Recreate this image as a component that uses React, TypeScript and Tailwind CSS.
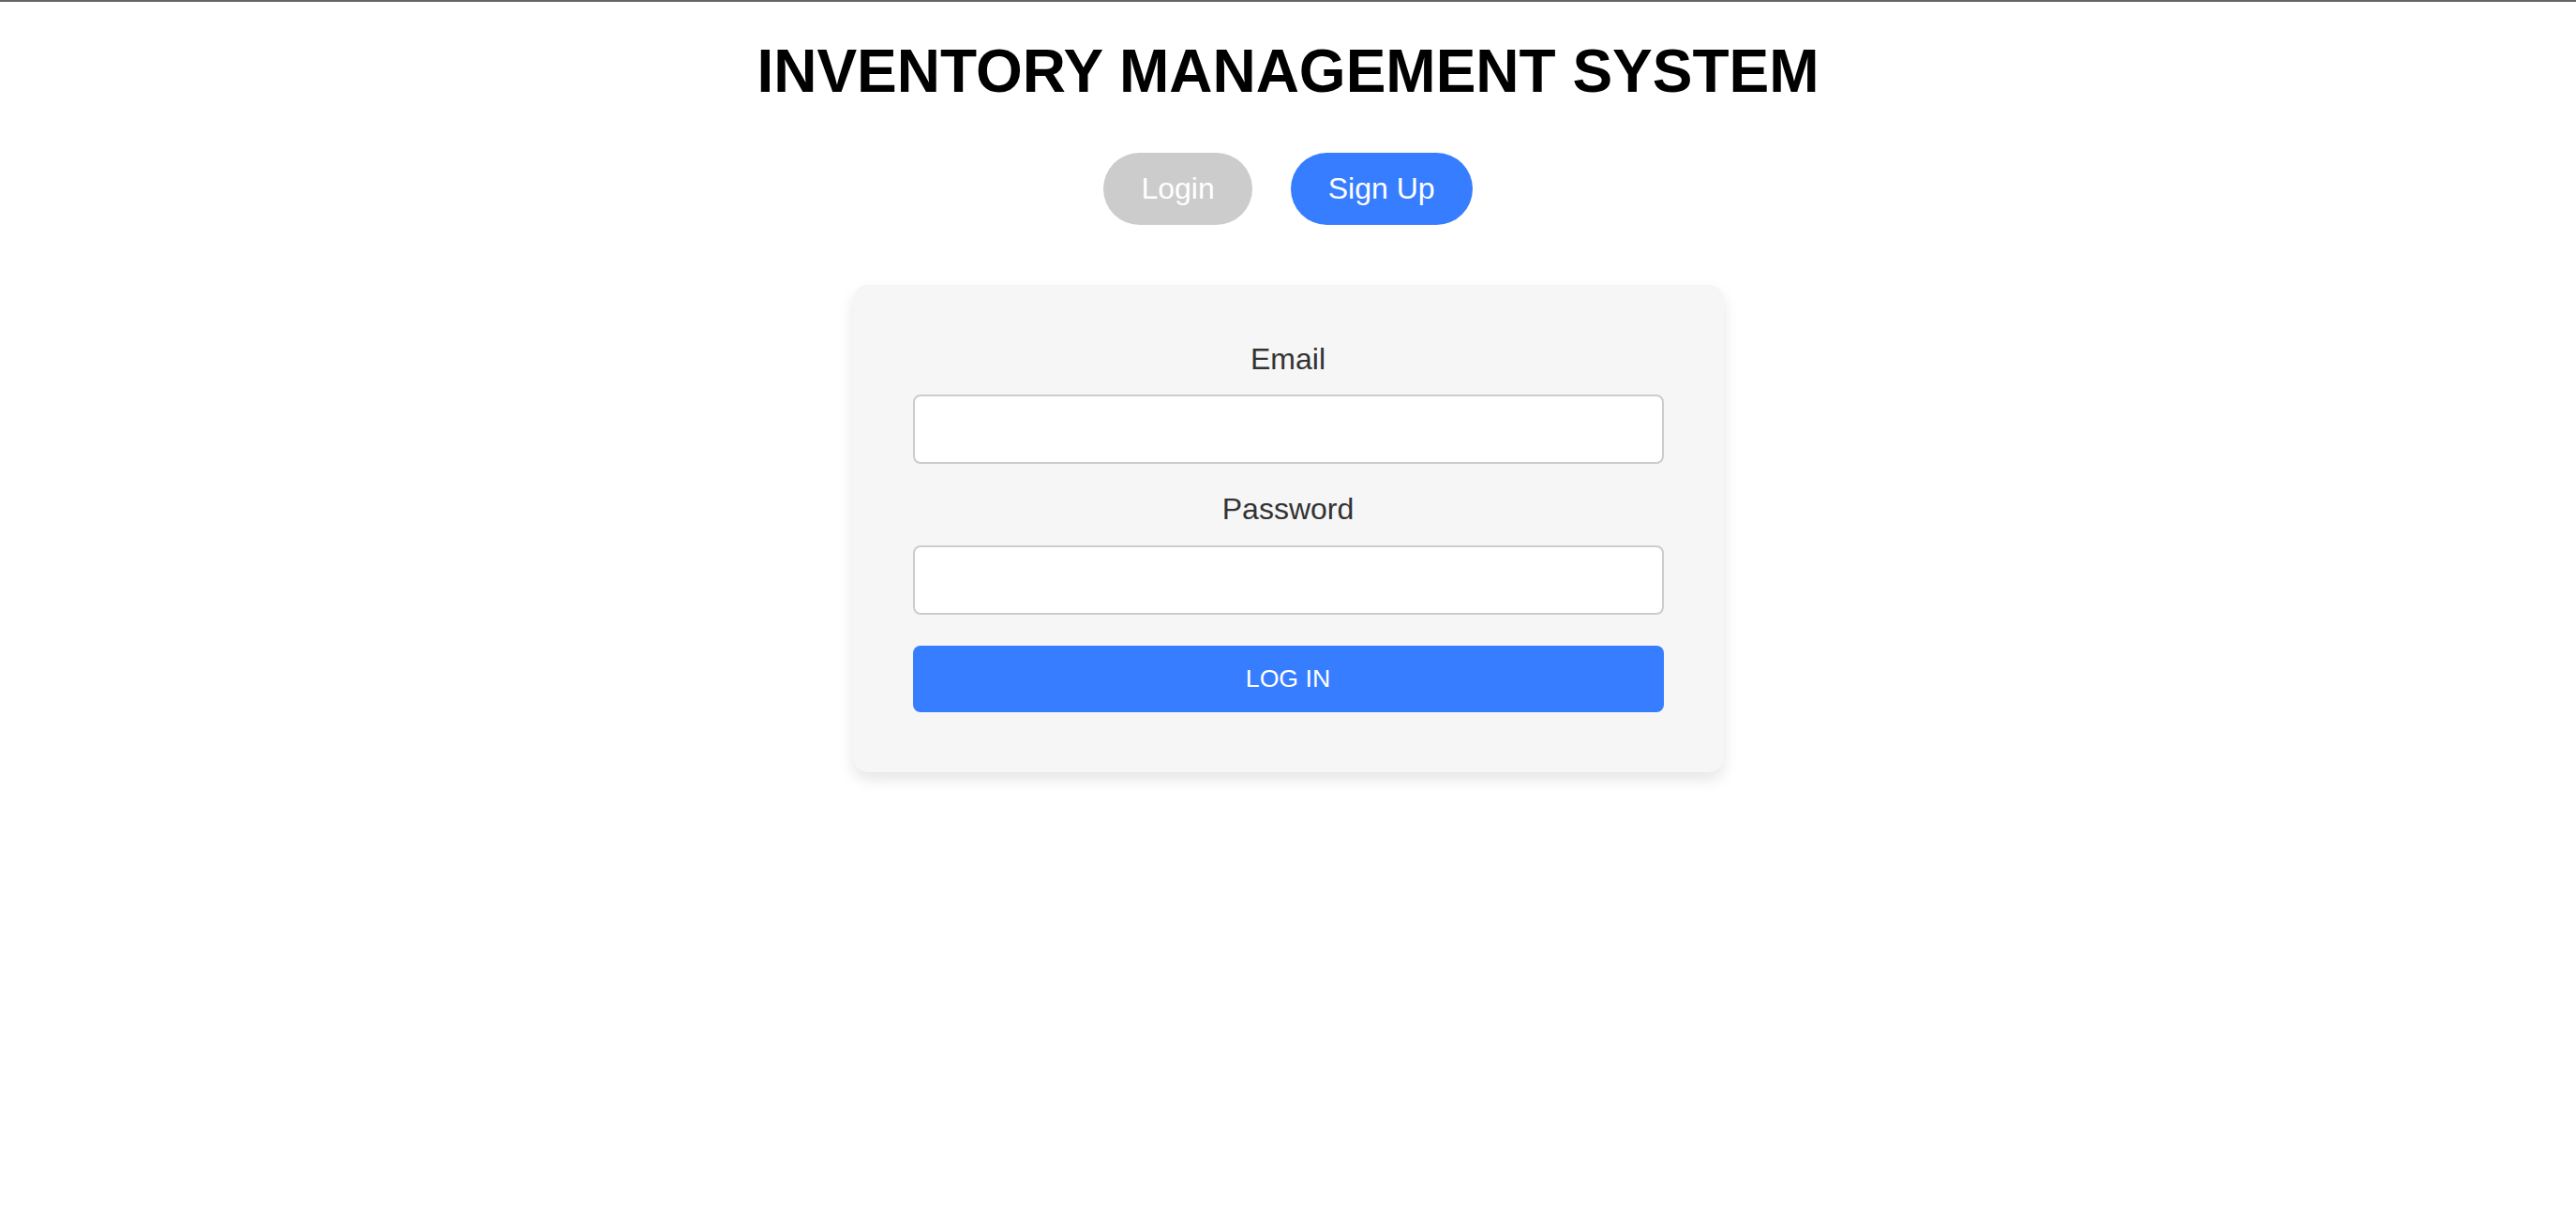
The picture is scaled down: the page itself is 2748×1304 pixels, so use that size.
import { useState } from "react"

const font = { fontFamily: '"Liberation Sans", Arial, sans-serif' }

export default function App() {
  const [mode, setMode] = useState<"login" | "signup">("login")
  const [email, setEmail] = useState("")
  const [password, setPassword] = useState("")

  return (
    <div className="min-h-screen bg-white border-t-2 border-[#666666]" style={font}>
      <div className="flex flex-col items-center">
        <h1 className="mt-[38px] text-[64px] leading-[73.6px] font-bold text-black">INVENTORY MANAGEMENT SYSTEM</h1>

        {/* Tabs */}
        <div className="mt-[49px] flex gap-[41px]">
          <button
            onClick={() => setMode("login")}
            className="h-[77px] px-[40px] rounded-full bg-[#cccccc] text-white text-[32px] leading-[37px]"
          >
            Login
          </button>
          <button
            onClick={() => setMode("signup")}
            className="h-[77px] px-[40px] rounded-full bg-[#377dff] text-white text-[32px] leading-[37px]"
          >
            Sign Up
          </button>
        </div>

        {/* Form card */}
        <form
          onSubmit={(e) => e.preventDefault()}
          className="mt-[64px] w-[929px] bg-[#f6f6f6] rounded-[16px] pt-[61px] pb-[64px] px-[64px] shadow-[0_8px_16px_rgba(0,0,0,0.1)]"
        >
          <label className="block text-center text-[32px] leading-[36.8px] text-[#333333] mb-[20px]">Email</label>
          <input
            type="email"
            value={email}
            onChange={(e) => setEmail(e.target.value)}
            className="block w-full h-[74px] px-[16px] bg-white border-2 border-[#cccccc] rounded-[8px] text-[32px] outline-none"
          />
          <label className="block text-center text-[32px] leading-[36.8px] text-[#333333] mt-[30px] mb-[20px]">Password</label>
          <input
            type="password"
            value={password}
            onChange={(e) => setPassword(e.target.value)}
            className="block w-full h-[74px] px-[16px] bg-white border-2 border-[#cccccc] rounded-[8px] text-[32px] outline-none"
          />
          <button
            type="submit"
            className="mt-[33px] w-full h-[71px] rounded-[8px] bg-[#377dff] text-white text-[26.67px] leading-[31px]"
          >
            {mode === "login" ? "LOG IN" : "LOG IN"}
          </button>
        </form>
      </div>
    </div>
  )
}
